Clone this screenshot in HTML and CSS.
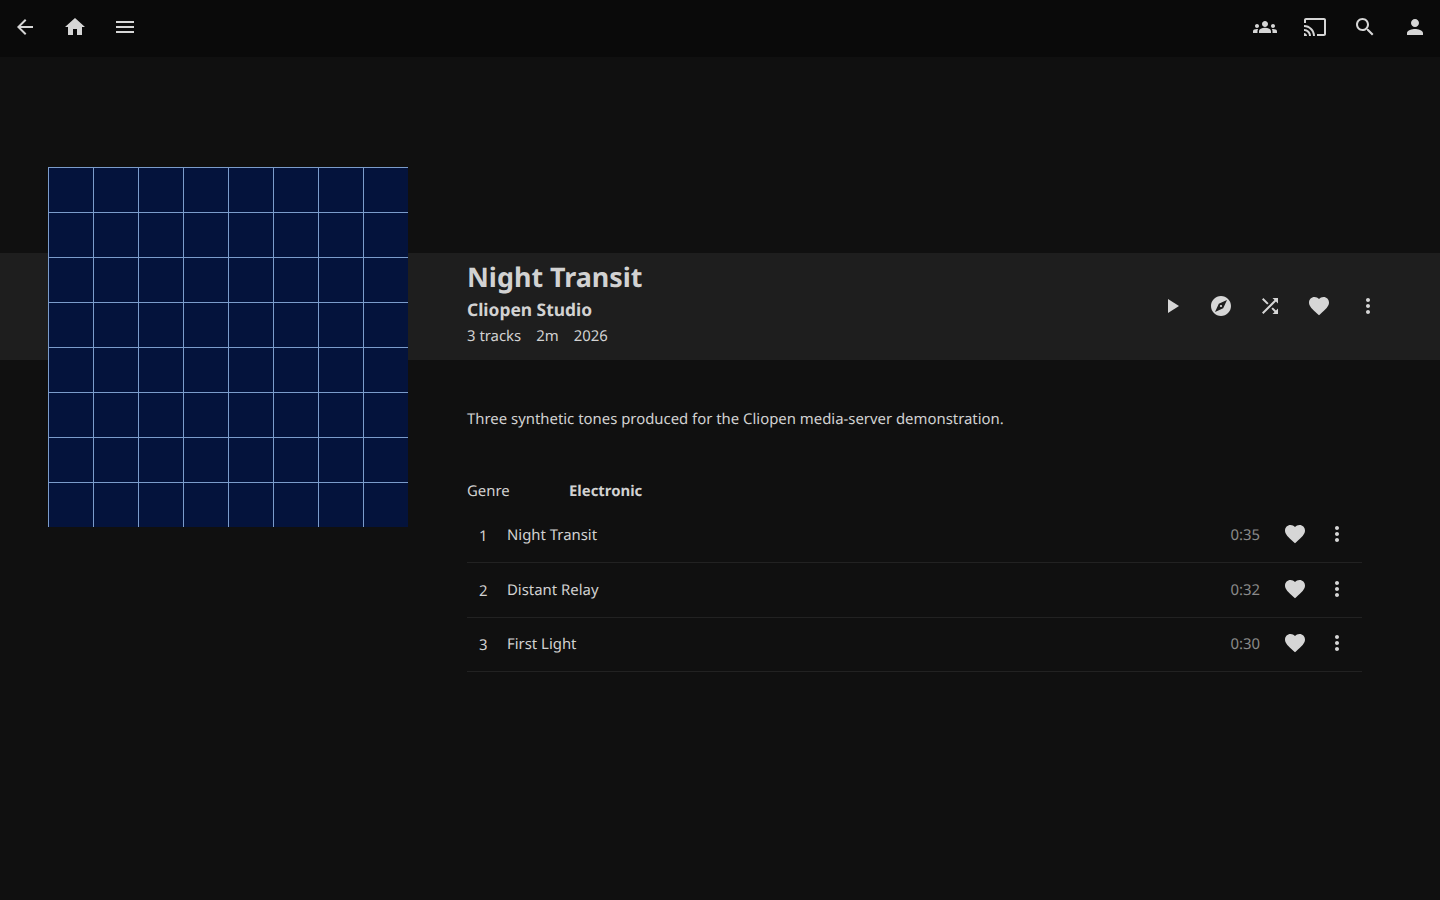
FILE: index.html
```html
<!DOCTYPE html>
<html>
<head>
  <title>Night Transit</title>
  <meta charset="UTF-8">
  <link rel="stylesheet" href="styles.css">
</head>
<body>
  <svg class="icon-defs" aria-hidden="true">
    <symbol id="i-back" viewBox="0 0 24 24"><path d="M20 11H7.83l5.59-5.59L12 4l-8 8 8 8 1.41-1.41L7.83 13H20v-2z"/></symbol>
    <symbol id="i-home" viewBox="0 0 24 24"><path d="M10 20v-6h4v6h5v-8h3L12 3 2 12h3v8z"/></symbol>
    <symbol id="i-menu" viewBox="0 0 24 24"><path d="M3 18h18v-2H3v2zm0-5h18v-2H3v2zm0-7v2h18V6H3z"/></symbol>
    <symbol id="i-groups" viewBox="0 0 24 24"><path d="M12 12.75c1.63 0 3.07.39 4.24.9 1.08.48 1.76 1.56 1.76 2.73V18H6v-1.61c0-1.18.68-2.26 1.76-2.73 1.17-.52 2.61-.91 4.24-.91zM4 13c1.1 0 2-.9 2-2s-.9-2-2-2-2 .9-2 2 .9 2 2 2zm1.13 1.1c-.37-.06-.74-.1-1.13-.1-.99 0-1.93.21-2.78.58C.48 14.9 0 15.62 0 16.43V18h4.5v-1.61c0-.83.23-1.61.63-2.29zM20 13c1.1 0 2-.9 2-2s-.9-2-2-2-2 .9-2 2 .9 2 2 2zm4 3.43c0-.81-.48-1.53-1.22-1.85-.85-.37-1.79-.58-2.78-.58-.39 0-.76.04-1.13.1.4.68.63 1.46.63 2.29V18H24v-1.57zM12 6c1.66 0 3 1.34 3 3s-1.34 3-3 3-3-1.34-3-3 1.34-3 3-3z"/></symbol>
    <symbol id="i-cast" viewBox="0 0 24 24"><path d="M21 3H3c-1.1 0-2 .9-2 2v3h2V5h18v14h-7v2h7c1.1 0 2-.9 2-2V5c0-1.1-.9-2-2-2zM1 18v3h3c0-1.66-1.34-3-3-3zm0-4v2c2.76 0 5 2.24 5 5h2c0-3.87-3.13-7-7-7zm0-4v2c4.97 0 9 4.03 9 9h2c0-6.08-4.93-11-11-11z"/></symbol>
    <symbol id="i-search" viewBox="0 0 24 24"><path d="M15.5 14h-.79l-.28-.27C15.41 12.59 16 11.11 16 9.5 16 5.91 13.09 3 9.5 3S3 5.91 3 9.5 5.91 16 9.5 16c1.61 0 3.09-.59 4.23-1.57l.27.28v.79l5 4.99L20.49 19l-4.99-5zm-6 0C7.01 14 5 11.99 5 9.5S7.01 5 9.5 5 14 7.01 14 9.5 11.99 14 9.5 14z"/></symbol>
    <symbol id="i-person" viewBox="0 0 24 24"><path d="M12 12c2.21 0 4-1.79 4-4s-1.79-4-4-4-4 1.79-4 4 1.79 4 4 4zm0 2c-2.67 0-8 1.34-8 4v2h16v-2c0-2.66-5.33-4-8-4z"/></symbol>
    <symbol id="i-play" viewBox="0 0 24 24"><path d="M8 5v14l11-7z"/></symbol>
    <symbol id="i-explore" viewBox="0 0 24 24"><path d="M12 10.9c-.61 0-1.1.49-1.1 1.1s.49 1.1 1.1 1.1c.61 0 1.1-.49 1.1-1.1s-.49-1.1-1.1-1.1zM12 2C6.48 2 2 6.48 2 12s4.48 10 10 10 10-4.48 10-10S17.52 2 12 2zm2.19 12.19L6 18l3.81-8.19L18 6l-3.81 8.19z"/></symbol>
    <symbol id="i-shuffle" viewBox="0 0 24 24"><path d="M10.59 9.17L5.41 4 4 5.41l5.17 5.17 1.42-1.41zM14.5 4l2.04 2.04L4 18.59 5.41 20 17.96 7.46 20 9.5V4h-5.5zm.33 9.41l-1.41 1.41 3.13 3.13L14.5 20H20v-5.5l-2.04 2.04-3.13-3.13z"/></symbol>
    <symbol id="i-heart" viewBox="0 0 24 24"><path d="M12 21.35l-1.45-1.32C5.4 15.36 2 12.28 2 8.5 2 5.42 4.42 3 7.5 3c1.74 0 3.41.81 4.5 2.09C13.09 3.81 14.76 3 16.5 3 19.58 3 22 5.42 22 8.5c0 3.78-3.4 6.86-8.55 11.54L12 21.35z"/></symbol>
    <symbol id="i-more" viewBox="0 0 24 24"><path d="M12 8c1.1 0 2-.9 2-2s-.9-2-2-2-2 .9-2 2 .9 2 2 2zm0 2c-1.1 0-2 .9-2 2s.9 2 2 2 2-.9 2-2-.9-2-2-2zm0 6c-1.1 0-2 .9-2 2s.9 2 2 2 2-.9 2-2-.9-2-2-2z"/></symbol>
  </svg>

  <div class="header">
    <div class="header-group">
      <button class="header-btn"><svg class="icon"><use href="#i-back"/></svg></button>
      <button class="header-btn"><svg class="icon"><use href="#i-home"/></svg></button>
      <button class="header-btn"><svg class="icon"><use href="#i-menu"/></svg></button>
    </div>
    <div class="header-group">
      <button class="header-btn"><svg class="icon"><use href="#i-groups"/></svg></button>
      <button class="header-btn"><svg class="icon"><use href="#i-cast"/></svg></button>
      <button class="header-btn"><svg class="icon"><use href="#i-search"/></svg></button>
      <button class="header-btn"><svg class="icon"><use href="#i-person"/></svg></button>
    </div>
  </div>

  <div class="page">
    <div class="album-art"></div>

    <div class="detail-band">
      <div class="detail-info">
        <h1>Night Transit</h1>
        <h3>Cliopen Studio</h3>
        <div class="meta">
          <span>3 tracks</span>
          <span>2m</span>
          <span>2026</span>
        </div>
      </div>
      <div class="detail-actions">
        <button class="action-btn"><svg class="icon"><use href="#i-play"/></svg></button>
        <button class="action-btn"><svg class="icon"><use href="#i-explore"/></svg></button>
        <button class="action-btn"><svg class="icon"><use href="#i-shuffle"/></svg></button>
        <button class="action-btn"><svg class="icon"><use href="#i-heart"/></svg></button>
        <button class="action-btn"><svg class="icon"><use href="#i-more"/></svg></button>
      </div>
    </div>

    <div class="content">
      <p class="overview">Three synthetic tones produced for the Cliopen media-server demonstration.</p>

      <div class="detail-row">
        <span class="detail-label">Genre</span>
        <span class="detail-value">Electronic</span>
      </div>

      <div class="track-list">
        <div class="track">
          <span class="track-num">1</span>
          <span class="track-name">Night Transit</span>
          <span class="track-time">0:35</span>
          <button class="track-btn"><svg class="icon"><use href="#i-heart"/></svg></button>
          <button class="track-btn"><svg class="icon"><use href="#i-more"/></svg></button>
        </div>
        <div class="track">
          <span class="track-num">2</span>
          <span class="track-name">Distant Relay</span>
          <span class="track-time">0:32</span>
          <button class="track-btn"><svg class="icon"><use href="#i-heart"/></svg></button>
          <button class="track-btn"><svg class="icon"><use href="#i-more"/></svg></button>
        </div>
        <div class="track">
          <span class="track-num">3</span>
          <span class="track-name">First Light</span>
          <span class="track-time">0:30</span>
          <button class="track-btn"><svg class="icon"><use href="#i-heart"/></svg></button>
          <button class="track-btn"><svg class="icon"><use href="#i-more"/></svg></button>
        </div>
      </div>
    </div>
  </div>
</body>
</html>
```

FILE: styles.css
```css
html, body {
  margin: 0;
  height: 100%;
}

body {
  font-family: "Noto Sans", sans-serif;
  background-color: #101010;
  color: #d2d2d2;
  overflow: hidden;
  text-rendering: geometricPrecision;
}

.icon-defs {
  display: none;
}

.icon {
  width: 24px;
  height: 24px;
  fill: currentColor;
  display: block;
}

button {
  background: none;
  border: none;
  padding: 0;
  color: #d6d6d6;
  display: flex;
  align-items: center;
  justify-content: center;
  cursor: pointer;
}

.header {
  display: flex;
  justify-content: space-between;
  height: 57px;
  background-color: #0a0a0a;
}

.header-group {
  display: flex;
}

.header-btn {
  width: 50px;
  height: 54px;
}

.page {
  position: relative;
  padding-top: 196px;
}

/* cover sits over the band */
.album-art {
  position: absolute;
  left: 48px;
  top: 110px;
  width: 360px;
  height: 360px;
  background-color: #04133c;
  background-image:
    linear-gradient(#7b9ccb 1px, transparent 1px),
    linear-gradient(90deg, #7b9ccb 1px, transparent 1px);
  background-size: 45px 45px;
}

.detail-band {
  display: flex;
  justify-content: space-between;
  align-items: center;
  height: 107px;
  padding: 0 48px 0 467px;
  background-color: #1e1e1e;
}

.detail-info {
  padding-bottom: 7px;
}

h1 {
  margin: 0;
  font-size: 26.9px;
  line-height: 36px;
  font-weight: 700;
}

h3 {
  margin: 0;
  font-size: 17.4px;
  line-height: 30px;
  font-weight: 700;
}

.meta {
  display: flex;
  gap: 15px;
  font-size: 14.9px;
  line-height: 22px;
}

.detail-actions {
  display: flex;
  margin-bottom: 2px;
}

.action-btn {
  width: 49px;
  height: 49px;
}

.content {
  padding: 0 78px 0 467px;
}

.overview {
  margin: 47px 0 0;
  font-size: 14.9px;
  line-height: 24px;
}

.detail-row {
  display: flex;
  margin-top: 48px;
  font-size: 14.9px;
  line-height: 24px;
}

.detail-label {
  width: 102px;
}

.detail-value {
  font-weight: 700;
}

.track-list {
  margin-top: 5.5px;
}

.track {
  display: flex;
  align-items: center;
  box-sizing: border-box;
  height: 54.5px;
  padding: 0 0 2.4px 12px;
  border-bottom: 1px solid #222;
  font-size: 14.9px;
}

.track-num {
  width: 28px;
  padding-top: 4px;
}

.track-name {
  flex: 1;
  padding-top: 2px;
}

.track-time {
  color: #8a8a8a;
  margin-right: 14px;
  padding-top: 2px;
}

.track-btn {
  width: 42px;
  height: 42px;
}

.track-btn:last-child {
  margin-right: 4px;
}
```
